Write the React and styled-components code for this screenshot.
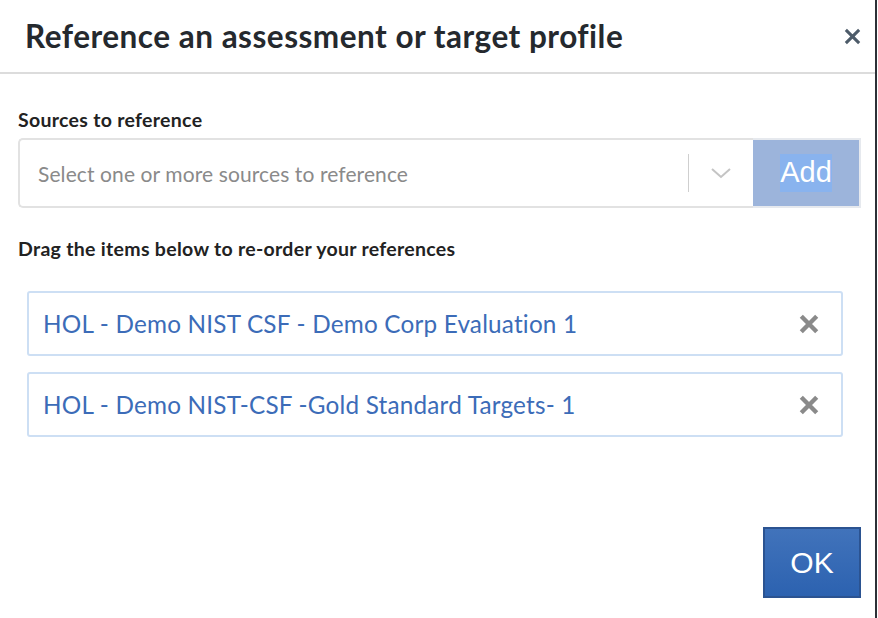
import React from "react";
import styled, { createGlobalStyle } from "styled-components";

const Global = createGlobalStyle`
  html, body { margin: 0; padding: 0; background: #fff; }
  body { font-family: Lato, "Open Sans", sans-serif; }
  * { box-sizing: border-box; }
`;

const Dialog = styled.div`
  width: 877px;
  height: 618px;
  background: #fff;
  display: flex;
  flex-direction: column;
  border-right: 2px solid #2c3036;
`;

const Header = styled.div`
  height: 74px;
  display: flex;
  align-items: center;
  justify-content: space-between;
  padding: 0 13px 0 25px;
  border-bottom: 2px solid #dcdcdc;
`;

const Title = styled.h1`
  margin: 0;
  font-family: Lato, sans-serif;
  font-weight: 700;
  font-size: 31.5px;
  color: #25292e;
  letter-spacing: 0.5px;
`;

const Close = styled.button`
  border: 0;
  background: none;
  padding: 0;
  width: 20px;
  height: 20px;
  display: flex;
  align-items: center;
  justify-content: center;
  color: #4d5b69;
  cursor: pointer;
`;

const Body = styled.div`
  flex: 1;
  display: flex;
  flex-direction: column;
  padding: 34px 14px 20px 18px;
`;

const Label = styled.div`
  font-family: Lato, sans-serif;
  font-weight: 700;
  font-size: 19.5px;
  color: #222;
  line-height: 24px;
  letter-spacing: 0.3px;
`;

const SelectRow = styled.div`
  display: flex;
  height: 70px;
  margin-top: 6px;
`;

const SelectBox = styled.div`
  flex: 1;
  display: flex;
  align-items: center;
  border: 2px solid #e2e2e2;
  border-right: 0;
  border-radius: 5px 0 0 5px;
  padding-left: 18px;
`;

const Placeholder = styled.span`
  flex: 1;
  font-size: 21px;
  color: #8a8a8a;
  letter-spacing: 0.1px;
`;

const Separator = styled.span`
  width: 1px;
  height: 38px;
  background: #cfcfcf;
`;

const Chevron = styled.span`
  width: 64px;
  display: flex;
  align-items: center;
  justify-content: center;
  color: #c4c4c4;
`;

const AddButton = styled.button`
  width: 108px;
  border: 2px solid #e6e9ee;
  border-left: 0;
  background: #9cb4db;
  font-family: "Liberation Sans", Arial, sans-serif;
  font-size: 29px;
  color: #fff;
  display: flex;
  align-items: center;
  justify-content: center;
  padding: 0;
`;

const Selected = styled.span`
  background: #89b3ee;
  padding: 2px 0 3px;
`;

const DragLabel = styled(Label)`
  margin-top: 29px;
`;

const List = styled.div`
  display: flex;
  flex-direction: column;
  gap: 16px;
  margin: 30px 18px 0 9px;
`;

const Item = styled.div`
  height: 65px;
  display: flex;
  align-items: center;
  justify-content: space-between;
  border: 2px solid #cddff4;
  border-radius: 3px;
  padding: 0 21px 0 14px;
  cursor: move;
`;

const ItemText = styled.span`
  font-size: 24.3px;
  color: #3c6cb8;
  letter-spacing: 0.2px;
`;

const Remove = styled.span`
  color: #8a8a8a;
  display: flex;
`;

const Footer = styled.div`
  margin-top: auto;
  display: flex;
  justify-content: flex-end;
`;

const OkButton = styled.button`
  width: 98px;
  height: 71px;
  border: 2px solid #2b5391;
  background: linear-gradient(#4173bb, #2c62b0);
  color: #fff;
  font-family: "Liberation Sans", Arial, sans-serif;
  font-size: 30px;
  padding: 0;
  cursor: pointer;
`;

const X = ({ size, w }) => (
  <svg width={size} height={size} viewBox="0 0 20 20">
    <path d="M3 3 L17 17 M17 3 L3 17" stroke="currentColor" strokeWidth={w} strokeLinecap="butt" />
  </svg>
);

const items = [
  "HOL - Demo NIST CSF - Demo Corp Evaluation 1",
  "HOL - Demo NIST-CSF -Gold Standard Targets- 1",
];

export default function App() {
  return (
    <>
      <Global />
      <Dialog>
        <Header>
          <Title>Reference an assessment or target profile</Title>
          <Close aria-label="Close">
            <X size={19} w={3.2} />
          </Close>
        </Header>
        <Body>
          <Label>Sources to reference</Label>
          <SelectRow>
            <SelectBox>
              <Placeholder>Select one or more sources to reference</Placeholder>
              <Separator />
              <Chevron>
                <svg width="22" height="12" viewBox="0 0 22 12">
                  <path d="M2 2 L11 10 L20 2" fill="none" stroke="currentColor" strokeWidth="2" />
                </svg>
              </Chevron>
            </SelectBox>
            <AddButton>
              <Selected>Add</Selected>
            </AddButton>
          </SelectRow>
          <DragLabel>Drag the items below to re-order your references</DragLabel>
          <List>
            {items.map((t) => (
              <Item key={t}>
                <ItemText>{t}</ItemText>
                <Remove>
                  <X size={22} w={4} />
                </Remove>
              </Item>
            ))}
          </List>
          <Footer>
            <OkButton>OK</OkButton>
          </Footer>
        </Body>
      </Dialog>
    </>
  );
}
